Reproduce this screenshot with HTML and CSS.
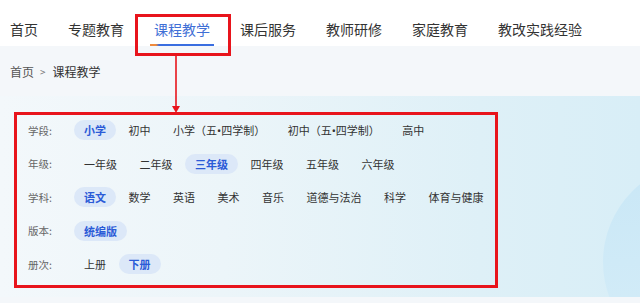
FILE: index.html
```html
<!DOCTYPE html>
<html lang="zh-CN">
<head>
<meta charset="utf-8">
<title>课程教学</title>
<link rel="stylesheet" href="styles.css">
</head>
<body>
<header class="nav">
  <a class="nav-item">首页</a>
  <a class="nav-item">专题教育</a>
  <a class="nav-item active">课程教学<span class="mark-box"></span></a>
  <a class="nav-item">课后服务</a>
  <a class="nav-item">教师研修</a>
  <a class="nav-item">家庭教育</a>
  <a class="nav-item">教改实践经验</a>
</header>
<svg class="arrow" width="12" height="60" viewBox="0 0 12 60">
  <line x1="6" y1="0" x2="6" y2="52" stroke="#e8141c" stroke-width="1.6"/>
  <polygon points="2,50 10,50 6,57" fill="#e8141c"/>
</svg>
<div class="crumb"><span>首页</span><span class="sep">&gt;</span><span class="cur">课程教学</span></div>
<section class="panel">
  <div class="filters">
    <div class="row">
      <span class="label">学段:</span>
      <span class="opt on">小学</span>
      <span class="opt">初中</span>
      <span class="opt">小学（五<span class="dot">•</span>四学制）</span>
      <span class="opt">初中（五<span class="dot">•</span>四学制）</span>
      <span class="opt">高中</span>
    </div>
    <div class="row">
      <span class="label">年级:</span>
      <span class="opt">一年级</span>
      <span class="opt">二年级</span>
      <span class="opt on">三年级</span>
      <span class="opt">四年级</span>
      <span class="opt">五年级</span>
      <span class="opt">六年级</span>
    </div>
    <div class="row">
      <span class="label">学科:</span>
      <span class="opt on">语文</span>
      <span class="opt">数学</span>
      <span class="opt">英语</span>
      <span class="opt">美术</span>
      <span class="opt">音乐</span>
      <span class="opt">道德与法治</span>
      <span class="opt">科学</span>
      <span class="opt">体育与健康</span>
    </div>
    <div class="row">
      <span class="label">版本:</span>
      <span class="opt on">统编版</span>
    </div>
    <div class="row">
      <span class="label">册次:</span>
      <span class="opt">上册</span>
      <span class="opt on">下册</span>
    </div>
  </div>
</section>
</body>
</html>
```

FILE: styles.css
```css
* { box-sizing: border-box; }
html, body { margin: 0; padding: 0; }
body {
  background: #f4f7fa;
  font-family: "Noto Sans CJK SC", "Noto Sans", sans-serif;
  color: #333;
  position: relative;
  width: 640px;
  height: 303px;
  overflow: hidden;
}
.nav {
  height: 46px;
  background: #fff;
  display: flex;
  padding-left: 10px;
  gap: 30px;
}
.nav-item {
  position: relative;
  height: 46px;
  padding-top: 19px;
  font-size: 14px;
  line-height: 20px;
  color: #333;
  text-decoration: none;
}
.nav-item.active { color: #3f6fd6; }
.nav-item.active::after {
  content: "";
  position: absolute;
  left: -4px;
  width: 64px;
  bottom: 0;
  height: 2px;
  background: linear-gradient(90deg, #f08a3c 0, #f08a3c 6px, #3a6ee0 9px, #3a6ee0 100%);
}
.mark-box {
  position: absolute;
  left: -19px;
  top: 14px;
  width: 96px;
  height: 42px;
  border: 3px solid #e8141c;
  z-index: 2;
}
.arrow {
  position: absolute;
  left: 170px;
  top: 56px;
  z-index: 2;
}
.crumb {
  height: 50px;
  display: flex;
  align-items: center;
  padding-left: 10px;
  font-size: 12px;
  color: #555;
}
.crumb .sep { font-size: 10px; color: #777; margin: 0 7px 0 6px; }
.crumb .cur { color: #333; }
.panel {
  position: relative;
  height: 201px;
  padding: 16px 0 0 14px;
  overflow: hidden;
  background: linear-gradient(90deg, #f3f8fb 0%, #ecf5f9 35%, #def0f7 75%, #d8eef7 100%);
}
.panel::after {
  content: "";
  position: absolute;
  left: 603px;
  top: 66px;
  width: 200px;
  height: 200px;
  border-radius: 50%;
  background: linear-gradient(180deg, #c9e7f6, #d5edf8);
}
.filters {
  position: relative;
  z-index: 1;
  width: 484px;
  height: 176px;
  border: 3px solid #e8141c;
  padding: 0 0 6px 11px;
  display: flex;
  flex-direction: column;
  gap: 3.5px;
}
.row {
  height: 30px;
  display: flex;
  align-items: center;
  gap: 2.5px;
}
.label {
  width: 46px;
  flex: none;
  font-size: 10.5px;
  color: #666;
  margin-right: -2.5px;
}
.opt {
  height: 20px;
  line-height: 20px;
  padding: 0 10px;
  font-size: 11px;
  color: #333;
  border-radius: 10px;
  white-space: nowrap;
}
.opt .dot {
  font-family: "Noto Sans", "DejaVu Sans", sans-serif;
}
.opt.on {
  background: #dce8f8;
  color: #2b5bd7;
  font-weight: 700;
}
```
